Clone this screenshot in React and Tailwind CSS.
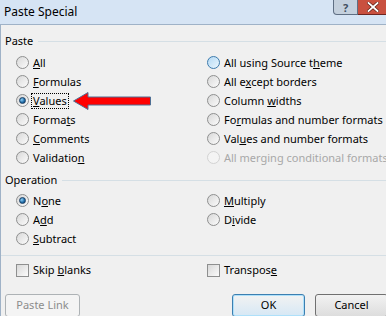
import React from "react";

const font = { fontFamily: '"Noto Sans", "Open Sans", sans-serif' };

function Radio({ checked = false, hover = false, disabled = false }) {
  let ring = "border-[#8e8f8f] bg-[linear-gradient(135deg,#d8d8d8,#fbfbfb)]";
  if (hover) ring = "border-[#3d7bad] bg-[linear-gradient(135deg,#b4d9f5,#eaf6fd)]";
  if (disabled) ring = "border-[#d3d3d3] bg-[#f4f4f4]";
  return (
    <span className={`relative flex h-[13px] w-[13px] shrink-0 items-center justify-center rounded-full border ${ring}`}>
      {checked && (
        <span className="h-[7px] w-[7px] rounded-full border border-[#1b3f64] bg-[radial-gradient(circle_at_35%_35%,#8fd0f7,#1d6aa6_60%,#0e3a66)]" />
      )}
    </span>
  );
}

function Row({ children, checked, hover, disabled, focus, after }) {
  return (
    <div className="flex h-[19px] items-center gap-[3px]">
      <Radio checked={checked} hover={hover} disabled={disabled} />
      <span
        className={`whitespace-nowrap px-[1px] leading-[14px] ${
          disabled ? "text-[#a8a8a8]" : "text-black"
        } ${focus ? "outline outline-1 outline-dotted outline-black" : ""}`}
      >
        {children}
      </span>
      {after}
    </div>
  );
}

function Header({ label }) {
  return (
    <div className="flex h-[16px] items-center gap-[5px] pl-[4px]">
      <span className="whitespace-nowrap">{label}</span>
      <span className="h-px flex-1 bg-[#d5dfe5]" />
    </div>
  );
}

function Check({ children }) {
  return (
    <div className="flex h-[19px] items-center gap-[3px]">
      <span className="h-[13px] w-[13px] shrink-0 border border-[#8e8f8f] bg-[linear-gradient(135deg,#d8d8d8,#fbfbfb)]" />
      <span className="whitespace-nowrap px-[1px]">{children}</span>
    </div>
  );
}

export default function App() {
  return (
    <div
      className="relative h-[316px] w-[386px] overflow-hidden bg-[#f0f0f0] text-[11px] text-black"
      style={font}
    >
      {/* title bar */}
      <div className="flex h-[24px] bg-[#d6e4f4] pl-[4px]">
        <span className="self-center text-[12px]">Paste Special</span>
        <div className="ml-auto flex h-[15px] shrink-0">
          <div className="flex h-[15px] w-[25px] shrink-0 items-center justify-center rounded-bl-[4px] border border-t-0 border-[#5f6f84] bg-[#c4d0dd] text-[11px] font-bold leading-none text-[#3f4e60]">
            ?
          </div>
          <div className="flex h-[15px] w-[28px] shrink-0 items-center justify-start border-b border-[#6e2620] bg-[#c9503f] pl-[9px]">
            <svg width="12" height="10" viewBox="0 0 12 10">
              <path d="M1.5 1 L10.5 9 M10.5 1 L1.5 9" stroke="#5a1d15" strokeWidth="3.2" strokeLinecap="square" />
              <path d="M1.5 1 L10.5 9 M10.5 1 L1.5 9" stroke="#ffffff" strokeWidth="1.8" strokeLinecap="square" />
            </svg>
          </div>
        </div>
      </div>

      {/* body */}
      <div className="flex h-[292px]">
        <div className="w-[3px] bg-[#cfdff1]" />
        <div className="flex-1 border-l border-t border-[#9fb2c7] bg-[#f0f0f0] pt-[8px]">
          <Header label="Paste" />
          <div className="mt-[4px] flex">
            <div className="w-[206px] pl-[15px]">
              <Row><u>A</u>ll</Row>
              <Row><u>F</u>ormulas</Row>
              <Row
                checked
                focus
                after={
                  <svg className="ml-[1px] shrink-0" width="80" height="20" viewBox="0 0 80 20">
                    <path
                      d="M1.5 10 L16 1.5 L16 6 L78.5 6 L78.5 14 L16 14 L16 18.5 Z"
                      fill="#ff0000"
                      stroke="#4f6f94"
                      strokeWidth="1"
                    />
                  </svg>
                }
              >
                <u>V</u>alues
              </Row>
              <Row>Forma<u>t</u>s</Row>
              <Row><u>C</u>omments</Row>
              <Row>Validatio<u>n</u></Row>
            </div>
            <div className="flex-1">
              <Row hover>All using Source t<u>h</u>eme</Row>
              <Row>All e<u>x</u>cept borders</Row>
              <Row>Column <u>w</u>idths</Row>
              <Row>Fo<u>r</u>mulas and number formats</Row>
              <Row>Val<u>u</u>es and number formats</Row>
              <Row disabled>All merging conditional formats</Row>
            </div>
          </div>

          <div className="mt-[5px]">
            <Header label="Operation" />
          </div>
          <div className="mt-[3px] flex">
            <div className="w-[206px] pl-[15px]">
              <Row checked>N<u>o</u>ne</Row>
              <Row>A<u>d</u>d</Row>
              <Row><u>S</u>ubtract</Row>
            </div>
            <div className="flex-1">
              <Row><u>M</u>ultiply</Row>
              <Row>D<u>i</u>vide</Row>
            </div>
          </div>

          <div className="mt-[7px] h-px bg-[#d5dfe5]" />

          <div className="mt-[5px] flex">
            <div className="w-[206px] pl-[15px]">
              <Check>Skip <u>b</u>lanks</Check>
            </div>
            <div className="flex-1">
              <Check>Transpos<u>e</u></Check>
            </div>
          </div>

          <div className="mt-[14px] flex items-start">
            <div className="ml-[4px] flex h-[23px] w-[75px] items-center justify-center rounded-[3px] border border-[#adb2b5] bg-[#f4f4f4] text-[#8c8c8c]">
              Paste Link
            </div>
            <div className="ml-[152px] flex h-[23px] w-[73px] items-center justify-center rounded-[3px] border border-[#3c7fb1] bg-[linear-gradient(to_bottom,#f2f2f2,#d6e8f5)] shadow-[inset_0_0_0_1px_#aee0fa]">
              OK
            </div>
            <div className="ml-[10px] flex h-[23px] w-[73px] items-center justify-center rounded-[3px] border border-[#707070] bg-[linear-gradient(to_bottom,#f2f2f2,#dddddd)]">
              Cancel
            </div>
          </div>
        </div>
      </div>
    </div>
  );
}
